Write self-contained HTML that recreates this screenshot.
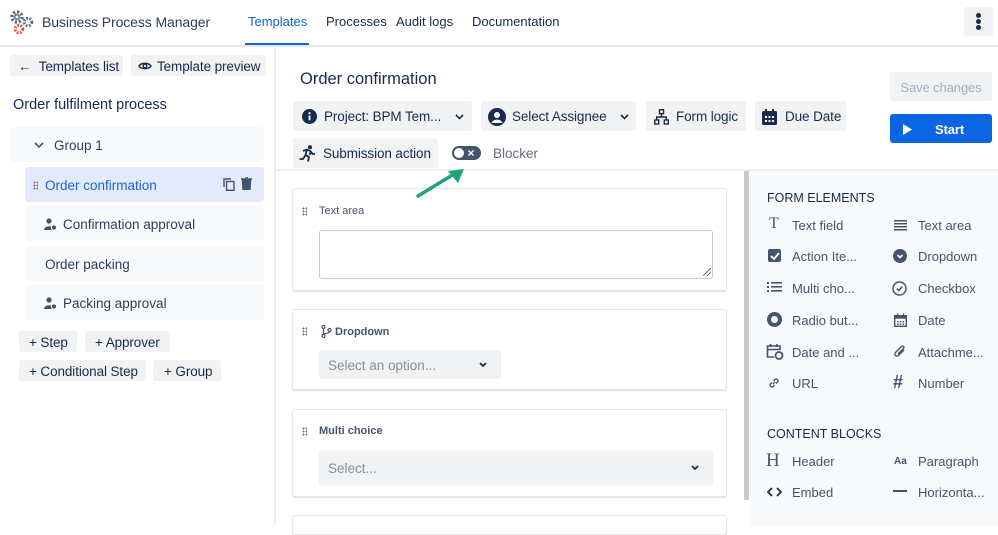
<!DOCTYPE html>
<html><head><meta charset="utf-8"><style>
*{box-sizing:border-box;margin:0;padding:0}
body{width:998px;height:526px;overflow:hidden;font-family:"Liberation Sans",sans-serif;color:#172b4d;background:#fff;position:relative;font-size:13.5px}
.a{position:absolute}
.btn{position:absolute;background:#f1f2f4;border-radius:3px;display:flex;align-items:center;font-size:13.5px;color:#172b4d;white-space:nowrap;letter-spacing:-0.1px;padding-top:1px}
.item{position:absolute;left:25px;width:239px;height:35px;background:#f8f9fb;border-radius:3px;display:flex;align-items:center;font-size:13.5px;color:#2c3e5d;padding-top:1px}
.card{position:absolute;left:292px;width:435px;background:#fff;border:1px solid #e4e6ea;border-radius:3px;box-shadow:0 1px 1px #dcdfe4}
.lbl{position:absolute;font-size:11px;color:#44546f;font-weight:bold}
.dots{position:absolute;width:5px;height:9px;background-image:radial-gradient(circle,#626f86 0.8px,transparent 1px);background-size:3px 3px}
.fe{position:absolute;font-size:13px;color:#44546f;white-space:nowrap;margin-top:1px}
</style></head><body>
<!-- header -->
<svg class="a" style="left:9px;top:9px" width="26" height="26" viewBox="0 0 26 26">
<circle cx="8" cy="8" r="5" fill="none" stroke="#5e6c84" stroke-width="3.5" stroke-dasharray="2.2 1.7"/><circle cx="8" cy="8" r="3" fill="#5e6c84"/><circle cx="8" cy="8" r="1.5" fill="#fff"/>
<circle cx="19" cy="13" r="3.8" fill="none" stroke="#5e6c84" stroke-width="3" stroke-dasharray="1.8 1.4"/><circle cx="19" cy="13" r="1.3" fill="#fff"/>
<circle cx="10" cy="20" r="3.8" fill="none" stroke="#e2542b" stroke-width="3" stroke-dasharray="1.8 1.4"/><circle cx="10" cy="20" r="1.3" fill="#fff"/>
</svg>
<div class="a" style="left:42px;top:14px;font-size:14px;letter-spacing:-0.1px;color:#2c3e5d">Business Process Manager</div>
<div class="a" style="left:248px;top:14px;font-size:13px;color:#0c66e4">Templates</div>
<div class="a" style="left:245px;top:43px;width:64px;height:3px;background:#0c66e4"></div>
<div class="a" style="left:326px;top:14px;font-size:13px">Processes</div>
<div class="a" style="left:396px;top:14px;font-size:13px">Audit logs</div>
<div class="a" style="left:472px;top:14px;font-size:13px">Documentation</div>
<div class="a" style="left:964px;top:7px;width:29px;height:29px;background:#f1f2f4;border-radius:3px"></div>
<div class="a" style="left:976px;top:13px;width:5px;height:5px;border-radius:50%;background:#172b4d;box-shadow:0 6px 0 #172b4d,0 12px 0 #172b4d"></div>
<div class="a" style="left:0;top:45px;width:998px;height:2px;background:#e6e8ec"></div>
<!-- left -->
<div class="a" style="left:274px;top:47px;width:2px;height:479px;background:#eceef1"></div>
<div class="btn" style="left:10px;top:55px;width:113px;height:21px;padding-left:8px">←&nbsp;&nbsp;Templates list</div>
<div class="btn" style="left:131px;top:55px;width:135px;height:21px;padding-left:7px"><svg width="14" height="10" viewBox="0 0 14 10" style="margin-right:5px"><path d="M1 5C3 1.5 11 1.5 13 5C11 8.5 3 8.5 1 5Z" fill="none" stroke="#172b4d" stroke-width="1.4"/><circle cx="7" cy="5" r="1.8" fill="none" stroke="#172b4d" stroke-width="1.4"/></svg>Template preview</div>
<div class="a" style="left:13px;top:97px;font-size:14.5px;color:#172b4d">Order fulfilment process</div>
<div class="item" style="left:11px;width:253px;top:127px;padding-left:23px"><svg width="10" height="6" viewBox="0 0 10 6" style="margin-right:10px"><path d="M1 1L5 5L9 1" fill="none" stroke="#44546f" stroke-width="1.6"/></svg>Group 1</div>
<div class="item" style="top:167px;background:#e3ebfb;color:#1d62d8;padding-left:8px"><span class="dots" style="position:static;margin-right:7px"></span>Order confirmation
<svg class="a" style="left:198px;top:11px" width="12" height="13" viewBox="0 0 12 13"><rect x="3.5" y="3.5" width="7.5" height="8.8" fill="none" stroke="#44546f" stroke-width="1.4"/><path d="M1 9V1H8" fill="none" stroke="#44546f" stroke-width="1.4"/></svg>
<svg class="a" style="left:216px;top:10px" width="11" height="13" viewBox="0 0 11 13"><path d="M0 2H11M4 0H7M1.5 3.5H9.5L9 13H2Z" stroke="#44546f" fill="#44546f" stroke-width="1.4"/></svg></div>
<div class="item" style="top:206px;padding-left:19px"><svg width="13" height="12" viewBox="0 0 13 12" style="margin-right:6px"><circle cx="5" cy="3" r="2.6" fill="#44546f"/><path d="M0 12C0 7 10 7 10 12Z" fill="#44546f"/><circle cx="10" cy="9.5" r="2.6" fill="#44546f" stroke="#f8f9fb"/></svg>Confirmation approval</div>
<div class="item" style="top:246px;padding-left:20px">Order packing</div>
<div class="item" style="top:285px;padding-left:19px"><svg width="13" height="12" viewBox="0 0 13 12" style="margin-right:6px"><circle cx="5" cy="3" r="2.6" fill="#44546f"/><path d="M0 12C0 7 10 7 10 12Z" fill="#44546f"/><circle cx="10" cy="9.5" r="2.6" fill="#44546f" stroke="#f8f9fb"/></svg>Packing approval</div>
<div class="btn" style="left:19px;top:331px;width:58px;height:21px;padding-left:10px">+ Step</div>
<div class="btn" style="left:85px;top:331px;width:85px;height:21px;padding-left:10px">+ Approver</div>
<div class="btn" style="left:19px;top:360px;width:127px;height:21px;padding-left:10px">+ Conditional Step</div>
<div class="btn" style="left:153px;top:360px;width:68px;height:21px;padding-left:11px">+ Group</div>
<!-- main top -->
<div class="a" style="left:300px;top:70px;font-size:16.5px;color:#172b4d">Order confirmation</div>
<div class="btn" style="left:890px;top:72px;width:102px;height:29px;justify-content:center;color:#a5adba;font-size:13px">Save changes</div>
<div class="btn" style="left:890px;top:114px;width:102px;height:29px;background:#0c66e4;color:#fff;padding-left:12px;font-weight:bold;font-size:13px"><svg width="10" height="11" viewBox="0 0 10 11"><path d="M1 0L10 5.5L1 11Z" fill="#fff"/></svg><span style="margin-left:23px">Start</span></div>
<div class="btn" style="left:293px;top:101px;width:179px;height:30px;padding-left:9px"><svg width="15" height="15" viewBox="0 0 16 16" style="margin-right:7px"><circle cx="8" cy="8" r="8" fill="#172b4d"/><rect x="7" y="7" width="2" height="5" fill="#fff"/><circle cx="8" cy="4.5" r="1.2" fill="#fff"/></svg>Project: BPM Tem...<svg width="9" height="6" viewBox="0 0 9 6" style="margin-left:14px"><path d="M1 1L4.5 4.5L8 1" fill="none" stroke="#172b4d" stroke-width="1.6"/></svg></div>
<div class="btn" style="left:481px;top:101px;width:155px;height:30px;padding-left:7px"><svg width="18" height="18" viewBox="0 0 18 18" style="margin-right:6px"><circle cx="9" cy="9" r="9" fill="#172b4d"/><circle cx="9" cy="7" r="3" fill="#fff"/><path d="M3.5 15C5 10.5 13 10.5 14.5 15Z" fill="#fff"/></svg>Select Assignee<svg width="9" height="6" viewBox="0 0 9 6" style="margin-left:13px"><path d="M1 1L4.5 4.5L8 1" fill="none" stroke="#172b4d" stroke-width="1.6"/></svg></div>
<div class="btn" style="left:646px;top:101px;width:100px;height:30px;padding-left:8px"><svg width="15" height="16" viewBox="0 0 15 16" style="margin-right:7px"><rect x="5.5" y="0.7" width="4" height="4" fill="none" stroke="#172b4d" stroke-width="1.4"/><rect x="0.7" y="11" width="4" height="4" fill="none" stroke="#172b4d" stroke-width="1.4"/><rect x="10.3" y="11" width="4" height="4" fill="none" stroke="#172b4d" stroke-width="1.4"/><path d="M7.5 4.7V8M2.7 11V8H12.3V11" fill="none" stroke="#172b4d" stroke-width="1.4"/></svg>Form logic</div>
<div class="btn" style="left:755px;top:101px;width:91px;height:30px;padding-left:7px"><svg width="15" height="16" viewBox="0 0 15 16" style="margin-right:8px"><rect x="0" y="2" width="15" height="14" rx="1.5" fill="#172b4d"/><rect x="3" y="0" width="2" height="4" fill="#172b4d"/><rect x="10" y="0" width="2" height="4" fill="#172b4d"/><g fill="#fff"><rect x="3" y="7" width="2" height="2"/><rect x="6.5" y="7" width="2" height="2"/><rect x="10" y="7" width="2" height="2"/><rect x="3" y="11" width="2" height="2"/><rect x="6.5" y="11" width="2" height="2"/><rect x="10" y="11" width="2" height="2"/></g></svg>Due Date</div>
<div class="btn" style="left:293px;top:138px;width:145px;height:30px;padding-left:6px"><svg width="17" height="17" viewBox="0 0 17 17" style="margin-right:7px"><circle cx="11" cy="2.3" r="2" fill="#172b4d"/><path d="M4 6L8 4.5L12 6.5L13.5 9H16M8 4.5L6.5 10L10 12L9 16.5M6.5 10L4 14H0.5M12 6.5L10.5 10" fill="none" stroke="#172b4d" stroke-width="1.8" stroke-linejoin="round"/></svg>Submission action</div>
<div class="a" style="left:452px;top:146px;width:29px;height:14px;border-radius:7px;background:#44546f"></div>
<div class="a" style="left:454px;top:148px;width:10px;height:10px;border-radius:50%;background:#fff"></div>
<svg class="a" style="left:468px;top:150px" width="6" height="6" viewBox="0 0 6 6"><path d="M0.5 0.5L5.5 5.5M5.5 0.5L0.5 5.5" stroke="#fff" stroke-width="1.4"/></svg>
<div class="a" style="left:493px;top:146px;font-size:13.5px;color:#626f86">Blocker</div>
<div class="a" style="left:276px;top:169px;width:722px;height:2px;background:#eef0f2"></div>
<!-- cards -->
<div class="card" style="top:188px;height:103px"></div>
<div class="dots" style="left:302px;top:207px"></div>
<div class="lbl" style="left:319px;top:205px;font-weight:normal;color:#44546f">Text area</div>
<div class="a" style="left:319px;top:230px;width:394px;height:49px;border:1px solid #c5cad2;border-radius:3px"></div>
<div class="a" style="left:703px;top:268px;width:8px;height:8px;background:linear-gradient(135deg,transparent 45%,#777 46%,#777 54%,transparent 55%,transparent 70%,#777 71%,#777 79%,transparent 80%)"></div>
<svg class="a" style="left:412px;top:164px" width="60" height="40" viewBox="0 0 60 40"><path d="M6 32L42 10" stroke="#1fa37e" stroke-width="3.5" stroke-linecap="round"/><path d="M52 5L36 7L46 19Z" fill="#1fa37e"/></svg>
<div class="card" style="top:309px;height:81px"></div>
<div class="dots" style="left:302px;top:327px"></div>
<svg class="a" style="left:321px;top:325px" width="11" height="13" viewBox="0 0 11 13"><circle cx="2.5" cy="2" r="1.5" fill="none" stroke="#44546f" stroke-width="1.2"/><circle cx="2.5" cy="11" r="1.5" fill="none" stroke="#44546f" stroke-width="1.2"/><circle cx="8.5" cy="5" r="1.5" fill="none" stroke="#44546f" stroke-width="1.2"/><path d="M2.5 3.5V9.5M8.5 6.5C8.5 9 3 8 2.5 9.5" fill="none" stroke="#44546f" stroke-width="1.2"/></svg>
<div class="lbl" style="left:335px;top:326px">Dropdown</div>
<div class="a" style="left:319px;top:350px;width:182px;height:29px;background:#f1f2f4;border-radius:3px;padding:8px 9px;font-size:13.5px;color:#8590a2">Select an option...<svg style="position:absolute;left:160px;top:12px" width="8" height="6" viewBox="0 0 8 6"><path d="M1 1L4 4L7 1" fill="none" stroke="#172b4d" stroke-width="1.8"/></svg></div>
<div class="card" style="top:409px;height:88px"></div>
<div class="dots" style="left:302px;top:427px"></div>
<div class="lbl" style="left:319px;top:425px">Multi choice</div>
<div class="a" style="left:319px;top:450px;width:394px;height:36px;background:#f1f2f4;border-radius:3px;padding:11px 9px;font-size:13.5px;color:#8590a2">Select...<svg style="position:absolute;left:372px;top:15px" width="8" height="6" viewBox="0 0 8 6"><path d="M1 1L4 4L7 1" fill="none" stroke="#172b4d" stroke-width="1.8"/></svg></div>
<div class="card" style="top:515px;height:20px"></div>
<!-- scrollbar -->
<div class="a" style="left:744px;top:171px;width:5px;height:329px;background:#c7c9cc"></div>
<!-- right panel -->
<div class="a" style="left:750px;top:171px;width:248px;height:355px;background:#f8f9fb"></div>
<div class="a" style="left:767px;top:191px;font-size:12.5px;color:#172b4d">FORM ELEMENTS</div>
<div class="fe" style="left:792px;top:217px">Text field</div><div class="fe" style="left:918px;top:217px">Text area</div>
<div class="fe" style="left:792px;top:248px">Action Ite...</div><div class="fe" style="left:918px;top:248px">Dropdown</div>
<div class="fe" style="left:792px;top:280px">Multi cho...</div><div class="fe" style="left:918px;top:280px">Checkbox</div>
<div class="fe" style="left:792px;top:312px">Radio but...</div><div class="fe" style="left:918px;top:312px">Date</div>
<div class="fe" style="left:792px;top:344px">Date and ...</div><div class="fe" style="left:918px;top:344px">Attachme...</div>
<div class="fe" style="left:792px;top:375px">URL</div><div class="fe" style="left:918px;top:375px">Number</div>
<div class="a" style="left:767px;top:427px;font-size:12.5px;color:#172b4d">CONTENT BLOCKS</div>
<div class="fe" style="left:792px;top:453px">Header</div><div class="fe" style="left:918px;top:453px">Paragraph</div>
<div class="fe" style="left:792px;top:484px">Embed</div><div class="fe" style="left:918px;top:484px">Horizonta...</div>
<!-- icons col1 -->
<div class="a" style="left:769px;top:215px;font-family:'Liberation Serif',serif;font-size:16px;color:#44546f">T</div>
<div class="a" style="left:768px;top:249px;width:13px;height:13px;background:#44546f;border-radius:2px"></div>
<svg class="a" style="left:769px;top:251px" width="12" height="10" viewBox="0 0 12 10"><path d="M2 5L5 8L10 2" fill="none" stroke="#fff" stroke-width="1.8"/></svg>
<svg class="a" style="left:767px;top:281px" width="15" height="12" viewBox="0 0 15 12"><g fill="#44546f"><rect x="0" y="1" width="2" height="2"/><rect x="0" y="5" width="2" height="2"/><rect x="0" y="9" width="2" height="2"/><rect x="4" y="1" width="11" height="1.6"/><rect x="4" y="5" width="11" height="1.6"/><rect x="4" y="9" width="11" height="1.6"/></g></svg>
<div class="a" style="left:767px;top:312px;width:15px;height:15px;border-radius:50%;border:4.5px solid #44546f"></div>
<svg class="a" style="left:766px;top:343px" width="18" height="17" viewBox="0 0 18 17"><path d="M8 14H1.5V3H14V7M1.5 6.5H14M4.5 1V4M11 1V4" fill="none" stroke="#44546f" stroke-width="1.6"/><circle cx="13" cy="12.5" r="3.5" fill="none" stroke="#44546f" stroke-width="1.8"/></svg>
<svg class="a" style="left:767px;top:376px" width="14" height="14" viewBox="0 0 14 14"><path d="M6 8L8 6M5 6.5L3 8.5A2.1 2.1 0 0 0 5.5 11L7.5 9M9 7.5L11 5.5A2.1 2.1 0 0 0 8.5 3L6.5 5" fill="none" stroke="#44546f" stroke-width="1.3"/></svg>
<div class="a" style="left:766px;top:450px;font-family:'Liberation Serif',serif;font-size:19px;color:#44546f">H</div>
<svg class="a" style="left:767px;top:487px" width="15" height="10" viewBox="0 0 15 10"><path d="M5 1L1 5L5 9M10 1L14 5L10 9" fill="none" stroke="#172b4d" stroke-width="1.8"/></svg>
<!-- icons col2 -->
<svg class="a" style="left:894px;top:219px" width="13" height="12" viewBox="0 0 13 12"><g fill="#44546f"><rect y="1" width="13" height="1.5"/><rect y="4" width="13" height="1.5"/><rect y="7" width="13" height="1.5"/><rect y="10" width="13" height="1.5"/></g></svg>
<svg class="a" style="left:893px;top:249px" width="14" height="14" viewBox="0 0 14 14"><circle cx="7" cy="7" r="7" fill="#44546f"/><path d="M4.5 6L7 8.5L9.5 6" fill="none" stroke="#fff" stroke-width="1.6"/></svg>
<svg class="a" style="left:892px;top:281px" width="15" height="15" viewBox="0 0 15 15"><circle cx="7.5" cy="7.5" r="6.5" fill="none" stroke="#44546f" stroke-width="1.5"/><path d="M4.8 7.5L6.8 9.5L10.3 5.5" fill="none" stroke="#44546f" stroke-width="1.5"/></svg>
<svg class="a" style="left:894px;top:313px" width="13" height="14" viewBox="0 0 13 14"><rect x="0.7" y="2.7" width="11.6" height="10.6" fill="none" stroke="#44546f" stroke-width="1.4"/><rect x="0.7" y="2.7" width="11.6" height="3" fill="#44546f"/><path d="M3.5 0.5V3M9.5 0.5V3" stroke="#44546f" stroke-width="1.4"/><g fill="#44546f"><rect x="3" y="8" width="1.5" height="1.5"/><rect x="5.8" y="8" width="1.5" height="1.5"/><rect x="8.6" y="8" width="1.5" height="1.5"/><rect x="3" y="10.5" width="1.5" height="1.5"/><rect x="5.8" y="10.5" width="1.5" height="1.5"/><rect x="8.6" y="10.5" width="1.5" height="1.5"/></g></svg>
<svg class="a" style="left:893px;top:344px" width="14" height="15" viewBox="0 0 14 15"><path d="M11 6L5.5 11.5A2 2 0 0 1 2.5 8.5L8.5 2.5A1.4 1.4 0 0 1 10.5 4.5L5 10" fill="none" stroke="#44546f" stroke-width="1.4"/></svg>
<div class="a" style="left:893px;top:372px;font-size:18px;font-weight:bold;color:#44546f">#</div>
<div class="a" style="left:894px;top:456px;font-size:10px;font-weight:bold;color:#44546f">Aa</div>
<div class="a" style="left:893px;top:490px;width:14px;height:2px;background:#44546f"></div>
</body></html>
